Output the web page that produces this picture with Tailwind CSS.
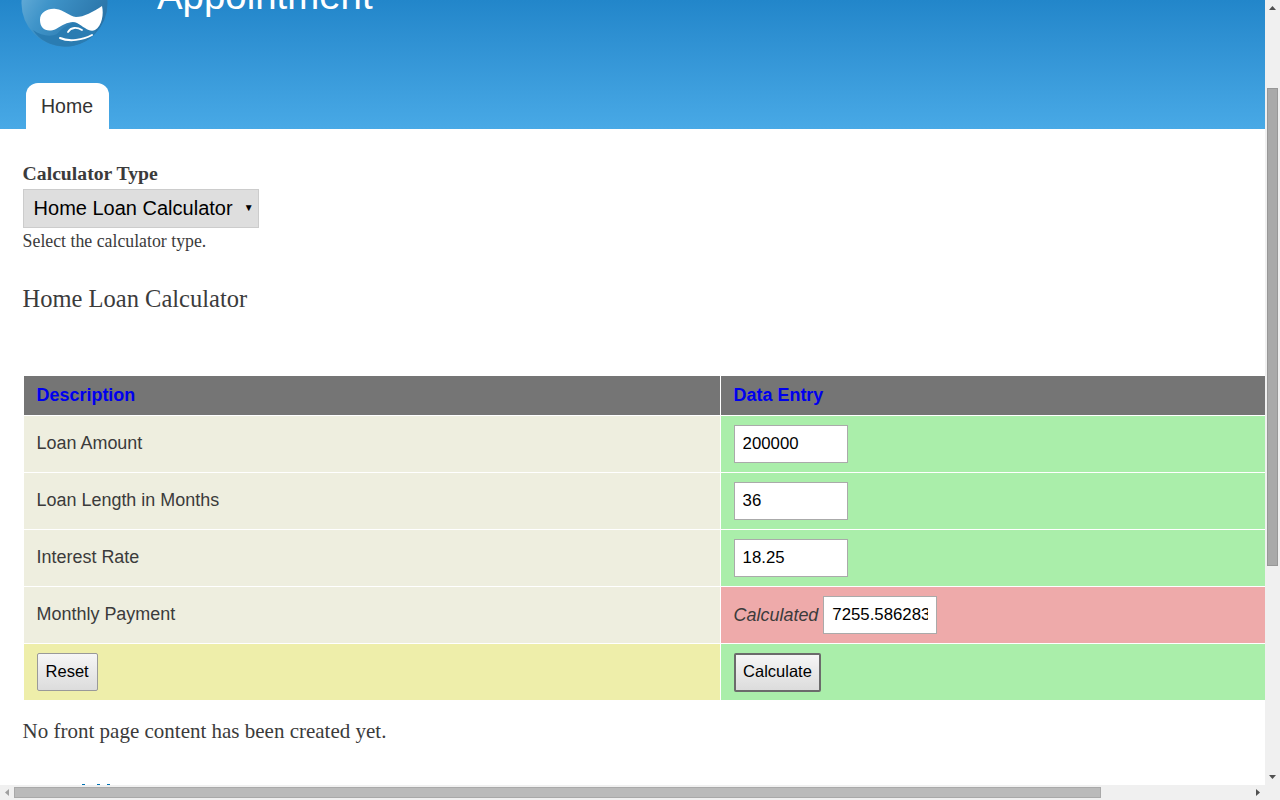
<!DOCTYPE html>
<html lang="en">
<head>
  <meta charset="UTF-8">
  <title>Appointment</title>
  <script src="https://cdn.jsdelivr.net/npm/@tailwindcss/browser@4"></script>
</head>
<body class="w-[1280px] h-[800px] overflow-hidden bg-white">
  <div class="flex flex-col h-[800px]">
    <div class="flex h-[785px]">
      <!-- page -->
      <div class="w-[1265px] h-[785px] overflow-hidden font-['Liberation_Serif',serif] text-[#3b3b3b]">
        <header class="h-[129px] overflow-hidden bg-gradient-to-b from-[#2286ca] to-[#48a9e6] flex flex-col justify-between">
          <div class="flex items-start pl-[21px] h-[47px]">
            <svg class="w-[87px] h-[47px]" viewBox="0 0 87 47">
              <defs>
                <linearGradient id="drop" x1="0" y1="0" x2="1" y2="0.600">
                  <stop offset="0" stop-color="#7ab9df"/>
                  <stop offset="0.450" stop-color="#3f94c9"/>
                  <stop offset="1" stop-color="#2a74a8"/>
                </linearGradient>
              </defs>
              <circle cx="43.500" cy="3.500" r="43" fill="url(#drop)"/>
              <path d="M36 34C44 26 50 22 56 23C62 25 70 32 75 30C74 38 58 47 44 46.500C30 46 18 40 12 30C20 36 30 37 36 34Z" fill="#2a7cb2"/>
              <path d="M19 20C19 12 27 8 35 9C43 10 48 16 55 17C63 17 72 12 81 6C83 14 81 26 74 30C69 33 63 27 56 23C50 20 42 25 35 29C26 33 19 29 19 20Z" fill="#fff"/>
              <path d="M47 32C50 27 56 27 61 30" fill="none" stroke="#fff" stroke-width="1.800" stroke-linecap="round"/>
              <path d="M39 38C48 42 62 40 71 35" fill="none" stroke="#fff" stroke-width="2" stroke-linecap="round"/>
            </svg>
            <div class="ml-[49px] -mt-[19px] font-['Liberation_Sans',sans-serif] text-[38.400px] leading-[30px] text-white">Appointment</div>
          </div>
          <nav class="pl-[26px]">
            <a class="inline-block w-[83px] h-[46px] pl-[15px] bg-white rounded-t-[12px] font-['Liberation_Sans',sans-serif] text-[19.500px] leading-[46px] text-[#333]">Home</a>
          </nav>
        </header>

        <main class="pl-[22.600px] w-[1439px]">
          <label class="block pt-[32px] mb-[4px] text-[19.700px] leading-[24px] font-bold">Calculator Type</label>
          <div class="flex items-center justify-between w-[236px] h-[39px] pl-[10px] pr-[4px] pb-[2px] bg-[#dedede] border border-[#ccc] font-['Liberation_Sans',sans-serif] text-[20px] text-black">
            <span>Home Loan Calculator</span>
            <span class="text-[10px]">▼</span>
          </div>
          <p class="text-[17.800px] leading-[26px]">Select the calculator type.</p>
          <h2 class="mt-[29px] text-[24.500px] leading-[32px] font-normal">Home Loan Calculator</h2>

          <table class="mt-[60px] w-[1393px] table-fixed border-collapse font-['Liberation_Sans',sans-serif] text-[17.950px] text-[#3b3b3b]">
            <thead>
              <tr class="h-[40px] bg-[#757575] text-left">
                <th class="w-[697px] border border-white pl-[13px] font-bold text-[#0000ee]">Description</th>
                <th class="border border-white pl-[13px] font-bold text-[#0000ee]">Data Entry</th>
              </tr>
            </thead>
            <tbody>
              <tr class="h-[57px]">
                <td class="border border-white pl-[13px] pb-[2px] bg-[#eeeedf]">Loan Amount</td>
                <td class="border border-white pl-[13px] bg-[#aaeeaa]"><input class="block w-[114px] h-[38px] px-2 bg-white border border-[#aaa] text-[16.800px] text-black" value="200000"></td>
              </tr>
              <tr class="h-[57px]">
                <td class="border border-white pl-[13px] pb-[2px] bg-[#eeeedf]">Loan Length in Months</td>
                <td class="border border-white pl-[13px] bg-[#aaeeaa]"><input class="block w-[114px] h-[38px] px-2 bg-white border border-[#aaa] text-[16.800px] text-black" value="36"></td>
              </tr>
              <tr class="h-[57px]">
                <td class="border border-white pl-[13px] pb-[2px] bg-[#eeeedf]">Interest Rate</td>
                <td class="border border-white pl-[13px] bg-[#aaeeaa]"><input class="block w-[114px] h-[38px] px-2 bg-white border border-[#aaa] text-[16.800px] text-black" value="18.25"></td>
              </tr>
              <tr class="h-[57px]">
                <td class="border border-white pl-[13px] pb-[2px] bg-[#eeeedf]">Monthly Payment</td>
                <td class="border border-white pl-[13px] bg-[#eeaaaa]">
                  <div class="flex items-center gap-[5px]">
                    <em>Calculated</em>
                    <input class="block w-[114px] h-[38px] px-2 bg-white border border-[#aaa] text-[16.800px] text-black" value="7255.586283">
                  </div>
                </td>
              </tr>
              <tr class="h-[57px]">
                <td class="border border-white pl-[13px] bg-[#eeeeaa]">
                  <button class="block h-[38px] px-2 pb-[2px] rounded-[2px] border border-[#999] bg-gradient-to-b from-[#f6f6f6] to-[#dcdcdc] text-[16.500px] text-black">Reset</button>
                </td>
                <td class="border border-white pl-[13px] bg-[#aaeeaa]">
                  <button class="block h-[39px] px-[7.500px] pb-[2px] rounded-[2px] border-2 border-[#6b6b6b] bg-gradient-to-b from-[#f6f6f6] to-[#dcdcdc] text-[16.500px] text-black">Calculate</button>
                </td>
              </tr>
            </tbody>
          </table>

          <p class="mt-[16px] text-[21px] leading-[28px]">No front page content has been created yet.</p>
          <!-- only the very tops of the next heading's letters show above the scrollbar -->
          <div class="flex mt-[39px] ml-[59px]">
            <span class="w-[3px] h-[1px] bg-[#0071b3]"></span>
            <span class="w-[3px] h-[1px] ml-[12px] bg-[#0071b3]"></span>
            <span class="w-[3px] h-[1px] ml-[7px] bg-[#0071b3]"></span>
          </div>
        </main>
      </div>

      <!-- vertical scrollbar -->
      <div class="w-[15px] flex flex-col items-center bg-[#f0f0f0]">
        <svg class="w-[15px] h-[15px] shrink-0" viewBox="0 0 15 15"><path d="M4 10L7.500 6L11 10Z" fill="#505050"/></svg>
        <div class="w-[11px] h-[478px] mt-[73px] bg-[#a9a9a9] border border-[#979797]"></div>
        <div class="flex-1"></div>
        <svg class="w-[15px] h-[15px] shrink-0" viewBox="0 0 15 15"><path d="M4 5L7.500 9L11 5Z" fill="#505050"/></svg>
      </div>
    </div>

    <!-- horizontal scrollbar -->
    <div class="h-[15px] flex items-center bg-[#f0f0f0]">
      <svg class="w-[14px] h-[15px] shrink-0" viewBox="0 0 14 15"><path d="M9 4L5 7.500L9 11Z" fill="#a0a0a0"/></svg>
      <div class="w-[1087px] h-[11px] bg-[#bababa] border border-[#a9a9a9]"></div>
      <div class="flex-1"></div>
      <svg class="w-[15px] h-[15px] mr-[15px] shrink-0" viewBox="0 0 15 15"><path d="M6 4L10 7.500L6 11Z" fill="#505050"/></svg>
    </div>
  </div>
</body>
</html>
